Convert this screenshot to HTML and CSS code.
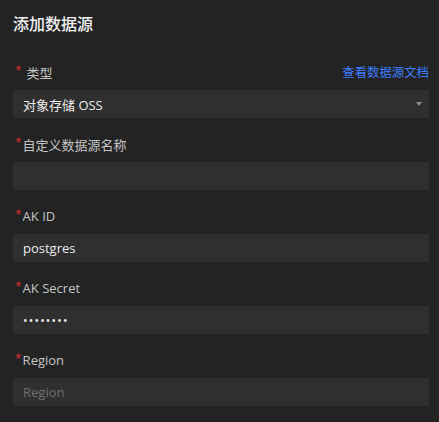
FILE: index.html
```html
<!DOCTYPE html>
<html lang="zh">
<head>
<meta charset="utf-8">
<link rel="stylesheet" href="styles.css">
</head>
<body>
<div class="panel">
  <h1 class="title">添加数据源</h1>
  <div class="field field-first">
    <div class="label-row">
      <label class="label"><span class="req req-gap">*</span>类型</label>
      <a class="doc-link">查看数据源文档</a>
    </div>
    <div class="input select"><span class="value">对象存储 OSS</span><span class="caret"></span></div>
  </div>
  <div class="field">
    <div class="label-row"><label class="label"><span class="req">*</span>自定义数据源名称</label></div>
    <div class="input"></div>
  </div>
  <div class="field">
    <div class="label-row"><label class="label"><span class="req">*</span>AK ID</label></div>
    <div class="input"><span class="value">postgres</span></div>
  </div>
  <div class="field">
    <div class="label-row"><label class="label"><span class="req">*</span>AK Secret</label></div>
    <div class="input"><span class="value dots">••••••••</span></div>
  </div>
  <div class="field">
    <div class="label-row"><label class="label"><span class="req">*</span>Region</label></div>
    <div class="input"><span class="placeholder">Region</span></div>
  </div>
</div>
</body>
</html>
```
FILE: styles.css
```css
html, body {
  margin: 0;
  background: #232323;
}
body {
  font-family: "Open Sans", "Noto Sans CJK SC", sans-serif;
  color: #e6e6e6;
  width: 439px;
  height: 422px;
  overflow: hidden;
}
.panel {
  padding: 0 10px 0 13px;
}
.title {
  margin: 0;
  height: 46px;
  line-height: 46px;
  font-size: 16px;
  font-weight: 500;
  color: #f2f2f2;
  font-family: "Noto Sans CJK SC", sans-serif;
}
.field {
  margin-bottom: 8px;
}
.field-first {
  padding-top: 8px;
}
.label-row {
  height: 36px;
  display: flex;
  align-items: center;
  justify-content: space-between;
}
.label {
  font-size: 13px;
  color: #c4c4c4;
  display: flex;
  align-items: center;
}
.req {
  color: #d43030;
  font-size: 12px;
  margin-left: 2px;
  margin-right: 1px;
  position: relative;
  top: -2px;
}
.req-gap { margin-right: 5px; }
.doc-link {
  font-size: 12.4px;
  color: #3d7cff;
  font-family: "Noto Sans CJK SC", sans-serif;
}
.input {
  height: 28px;
  background: #2f2f2f;
  border-radius: 3px;
  display: flex;
  align-items: center;
  padding: 0 10px;
  font-size: 13px;
}
.value { color: #ececec; }
.dots { font-size: 12px; letter-spacing: 1.2px; }
.placeholder { color: #6f6f6f; }
.select { justify-content: space-between; }
.caret {
  width: 0;
  height: 0;
  border-left: 3px solid transparent;
  border-right: 3px solid transparent;
  border-top: 4px solid #8a8a8a;
  margin-right: -3px;
}
```
